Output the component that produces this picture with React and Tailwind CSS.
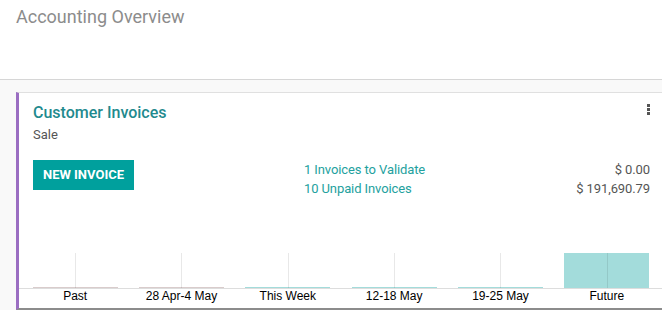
import React from "react";

const cols = [
  { label: "Past", h: 1, color: "bg-[#d9cccc]" },
  { label: "28 Apr-4 May", h: 1, color: "bg-[#d9cccc]" },
  { label: "This Week", h: 1, color: "bg-[#a3dcdb]" },
  { label: "12-18 May", h: 1, color: "bg-[#a3dcdb]" },
  { label: "19-25 May", h: 1, color: "bg-[#a3dcdb]" },
  { label: "Future", h: 35, color: "bg-[#a3dcdb]" },
];

export default function App() {
  return (
    <div className="w-[662px] h-[310px] overflow-hidden bg-[#f9f9f9] font-['Roboto',sans-serif]">
      <div className="h-[80px] bg-white border-b border-[#d6d6d6] px-4 pt-[6px]">
        <h1 className="text-[18px] leading-[21px] text-[#8c8c8c]">Accounting Overview</h1>
      </div>
      <div className="pt-3 pl-4">
        <div className="h-[218px] bg-white border-l-[3px] border-l-[#9b6ec2] border-t border-t-[#e0e0e0] border-b-2 border-b-[#8c8c8c] flex flex-col">
          <div className="pl-[14px] pr-[12px] pt-[10px]">
            <div className="flex items-start justify-between">
              <div className="text-[16px] leading-[20px] text-[#1f8a8e] font-medium">Customer Invoices</div>
              <div className="flex flex-col gap-[1px] mt-[1px]">
                <span className="block w-[3px] h-[3px] bg-[#555]"></span>
                <span className="block w-[3px] h-[3px] bg-[#555]"></span>
                <span className="block w-[3px] h-[3px] bg-[#555]"></span>
              </div>
            </div>
            <div className="mt-[3px] text-[13px] leading-[18px] text-[#555]">Sale</div>
            <div className="mt-4 flex items-start">
              <button className="w-[101px] h-[30px] bg-[#00a09d] text-white text-[13px] font-bold uppercase flex items-center justify-center">
                New Invoice
              </button>
              <div className="ml-auto w-[346px] text-[13px] leading-[19px] tracking-[-0.1px]">
                <div className="flex justify-between">
                  <span className="text-[#23a19e]">1 Invoices to Validate</span>
                  <span className="text-[#555]">$ 0.00</span>
                </div>
                <div className="flex justify-between">
                  <span className="text-[#23a19e]">10 Unpaid Invoices</span>
                  <span className="text-[#555]">$ 191,690.79</span>
                </div>
              </div>
            </div>
          </div>
          <div className="mt-auto">
            <div className="flex h-[35px] pl-[3px] pr-[2px]">
              {cols.map((c) => (
                <div key={c.label} className="relative flex-1 flex items-end justify-center">
                  <div className={`w-[80%] ${c.color}`} style={{ height: c.h }}></div>
                  <div className="absolute top-0 bottom-0 left-1/2 w-px bg-black/[0.09]"></div>
                </div>
              ))}
            </div>
            <div className="h-px bg-[#dddddd]"></div>
            <div className="flex h-[19px] pl-[3px] pr-[2px] font-['Liberation_Sans',Arial,sans-serif] text-[12px] leading-[14px] text-black">
              {cols.map((c) => (
                <div key={c.label} className="flex-1 text-center">{c.label}</div>
              ))}
            </div>
          </div>
        </div>
      </div>
    </div>
  );
}
